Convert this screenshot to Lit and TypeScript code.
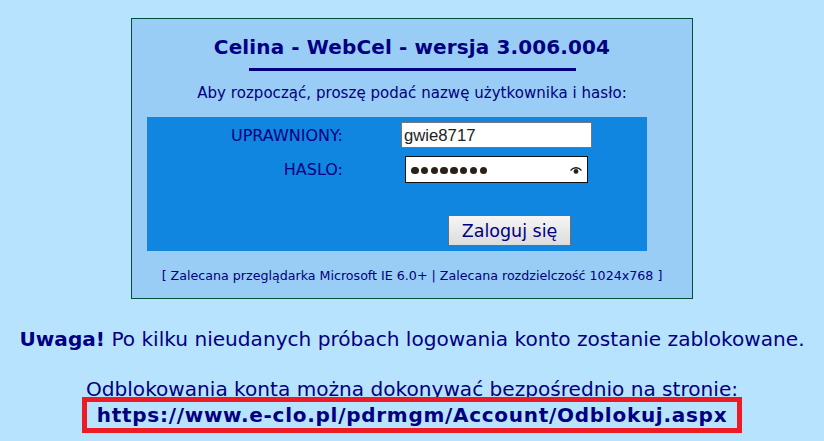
import { LitElement, html, css } from "lit";
import { customElement } from "lit/decorators.js";

@customElement("app-root")
export class AppRoot extends LitElement {
  static styles = css`
    :host {
      display: block;
      width: 824px;
      height: 441px;
      overflow: hidden;
      background: #b8e3ff;
      color: #000080;
      font-family: "DejaVu Sans", Verdana, sans-serif;
    }
    .page {
      display: flex;
      flex-direction: column;
      align-items: center;
      padding-top: 18px;
    }
    .card {
      box-sizing: border-box;
      width: 562px;
      height: 281px;
      border: 1px solid #00513c;
      background: #99cdf5;
      display: flex;
      flex-direction: column;
      align-items: center;
    }
    h1 {
      margin: 16px 0 0;
      font-size: 20px;
      line-height: 24px;
      font-weight: 700;
      letter-spacing: 0.12px;
      color: #000080;
    }
    .rule {
      width: 327px;
      height: 3px;
      margin-top: 9px;
      background: #000080;
    }
    .intro {
      margin: 13px 0 0;
      font-size: 15px;
      letter-spacing: 0.04px;
      line-height: 18px;
    }
    .panel {
      box-sizing: border-box;
      width: 500px;
      height: 134px;
      margin-top: 15px;
      align-self: flex-start;
      margin-left: 15px;
      background: #1086e0;
      display: grid;
      grid-template-columns: 196px 1fr;
      grid-template-rows: 26px 27px;
      row-gap: 8px;
      padding-top: 5px;
    }
    .label {
      text-align: right;
      font-size: 16px;
      line-height: 28px;
      color: #000080;
    }
    .field {
      box-sizing: border-box;
      font-family: "Liberation Sans", Arial, sans-serif;
      font-size: 16.7px;
      background: #fff;
      color: #222;
      display: flex;
      align-items: center;
    }
    .user {
      width: 191px;
      height: 26px;
      margin-left: 58px;
      border: 1px solid #767676;
      padding: 1px 0 0 2px;
    }
    .pass {
      width: 183px;
      height: 27px;
      margin-left: 62px;
      border: 1px solid #111;
      padding: 2px 5px 0 5px;
      justify-content: space-between;
    }
    .dots {
      display: flex;
      gap: 2.3px;
    }
    .dots span {
      width: 7.5px;
      height: 7.5px;
      border-radius: 50%;
      background: #2a2018;
    }
    .eye {
      width: 12px;
      height: 7px;
      display: block;
    }
    .actions {
      grid-column: 1 / 3;
      display: flex;
      justify-content: flex-start;
      padding-left: 301px;
      margin-top: 24px;
    }
    button {
      box-sizing: border-box;
      width: 123px;
      height: 31px;
      padding: 0;
      border: 1px solid #6e6e6e;
      background: linear-gradient(#f6f6f6, #dcdcdc);
      color: #000080;
      font-family: "DejaVu Sans", Verdana, sans-serif;
      font-size: 17.5px;
    }
    .foot {
      margin: 17px 0 0;
      font-size: 12.65px;
      line-height: 16px;
    }
    .notice {
      margin: 28px 0 0;
      font-size: 20.1px;
      line-height: 24px;
      white-space: nowrap;
    }
    .unlock {
      margin: 27px 0 0;
      font-size: 20.1px;
      line-height: 22px;
      white-space: nowrap;
    }
    .link {
      box-sizing: border-box;
      width: 660px;
      height: 36px;
      margin-top: -3px;
      border: 5px solid #ed1c24;
      display: flex;
      align-items: center;
      justify-content: center;
      font-size: 20px;
      letter-spacing: 0.72px;
      font-weight: 700;
      color: #000080;
      white-space: nowrap;
      position: relative;
    }
  `;

  render() {
    return html`
      <div class="page">
        <div class="card">
          <h1>Celina - WebCel - wersja 3.006.004</h1>
          <div class="rule"></div>
          <p class="intro">Aby rozpocząć, proszę podać nazwę użytkownika i hasło:</p>
          <div class="panel">
            <div class="label">UPRAWNIONY:</div>
            <div class="field user">gwie8717</div>
            <div class="label">HASLO:</div>
            <div class="field pass">
              <div class="dots">
                ${Array.from({ length: 8 }, () => html`<span></span>`)}
              </div>
              <svg class="eye" viewBox="0 0 12 7">
                <path d="M0 3.2C2 1 4 0 6 0S10 1 12 3.2L10.8 3.9C9.2 2.4 7.6 1.6 6 1.6S2.8 2.4 1.2 3.9Z" fill="#222"></path>
                <circle cx="6" cy="4.4" r="2.4" fill="#222"></circle>
              </svg>
            </div>
            <div class="actions"><button>Zaloguj się</button></div>
          </div>
          <p class="foot">[ Zalecana przeglądarka Microsoft IE 6.0+ | Zalecana rozdzielczość 1024x768 ]</p>
        </div>
        <p class="notice"><b>Uwaga!</b> Po kilku nieudanych próbach logowania konto zostanie zablokowane.</p>
        <p class="unlock">Odblokowania konta można dokonywać bezpośrednio na stronie:</p>
        <div class="link">https://www.e-clo.pl/pdrmgm/Account/Odblokuj.aspx</div>
      </div>
    `;
  }
}
